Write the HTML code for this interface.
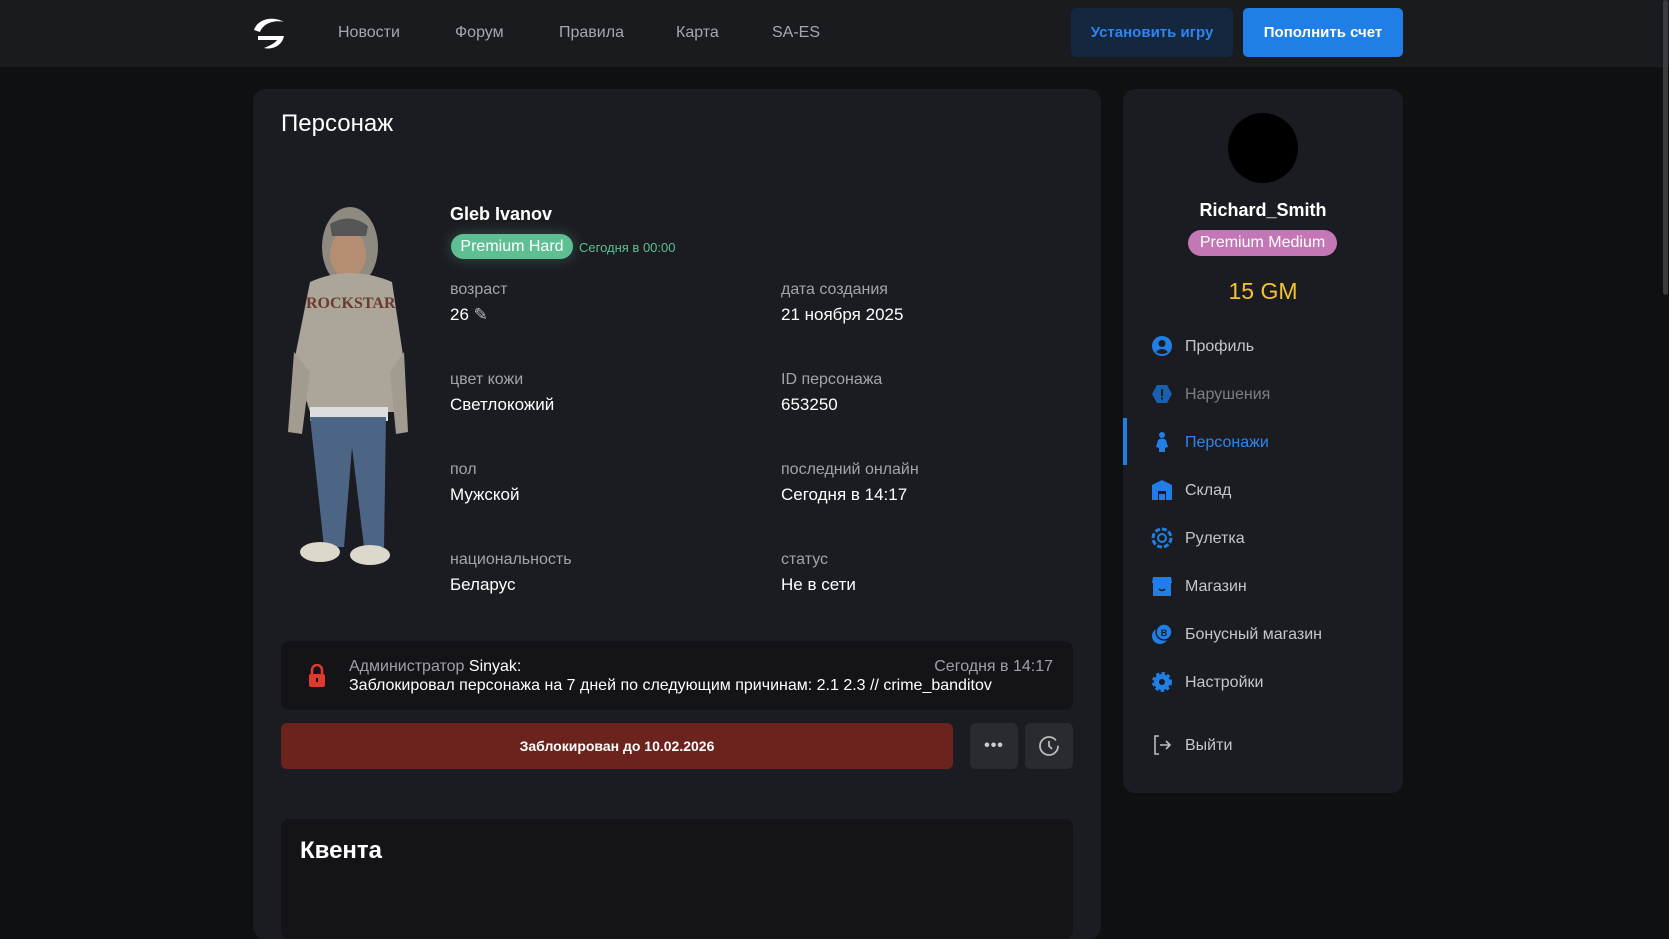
<!DOCTYPE html>
<html><head><meta charset="utf-8"><style>
*{box-sizing:border-box;margin:0;padding:0}
body{width:1669px;height:888px;overflow:hidden;background:#0f1012;font-family:"Liberation Sans","DejaVu Sans",sans-serif;color:#fff;position:relative}
.a{position:absolute}
.nav{left:0;top:0;width:1669px;height:67px;background:#1a1b1f}
.nl{top:24px;font-size:16px;color:#a6a7ad}
.btn{top:8px;height:49px;border-radius:5px;font-size:15px;font-weight:bold;display:flex;align-items:center;justify-content:center}
.card{background:#1b1c21;border-radius:12px}
.lab{font-size:16px;color:#a3a4aa}
.val{font-size:17px;color:#fff}
.mi{left:1185px;font-size:16px;color:#c5c6cb}
.ic{left:1151px;width:22px;height:22px}
</style></head><body>
<div class="a nav"></div>
<svg class="a" style="left:250px;top:12px" width="40" height="40" viewBox="0 0 40 40"><path d="M4 18 C8 6 24 4 34 10 C26 8 14 10 10 20 Z" fill="#fff"/><path d="M8 24 L34 24 C32 34 22 38 14 36 C22 33 26 30 27 28 L8 28 Z" fill="#fff"/></svg>
<div class="a nl" style="left:338px">Новости</div>
<div class="a nl" style="left:455px">Форум</div>
<div class="a nl" style="left:559px">Правила</div>
<div class="a nl" style="left:676px">Карта</div>
<div class="a nl" style="left:772px">SA-ES</div>
<div class="a btn" style="left:1071px;width:162px;background:#15263f;color:#2d86ee">Установить игру</div>
<div class="a btn" style="left:1243px;width:160px;background:#1f7fe6;color:#fff">Пополнить счет</div>
<div class="a" style="left:1663px;top:0;width:5px;height:295px;background:#3a3b40;border-radius:3px"></div>

<div class="a card" style="left:253px;top:89px;width:848px;height:850px"></div>
<div class="a" style="left:281px;top:110px;font-size:24px">Персонаж</div>
<svg class="a" style="left:280px;top:202px" width="152" height="398" viewBox="0 0 152 398">
<ellipse cx="70" cy="45" rx="28" ry="40" fill="#8e8a80"/>
<ellipse cx="68" cy="52" rx="18" ry="24" fill="#b58d72"/>
<path d="M50 22 Q70 10 88 24 L86 34 L52 34Z" fill="#555"/>
<path d="M30 80 Q70 62 112 80 L124 160 L116 210 L30 210 L14 160 Z" fill="#aba59a"/>
<path d="M14 150 L8 230 L22 232 L30 170Z M124 150 L128 230 L116 232 L110 170Z" fill="#a29c90"/>
<text x="26" y="106" font-family="Liberation Serif" font-weight="bold" font-size="16" fill="#6a3b2e">ROCKSTAR</text>
<rect x="30" y="205" width="78" height="14" fill="#ddd"/>
<path d="M30 215 L106 215 L104 345 L84 345 L72 245 L64 345 L44 345 Z" fill="#4d6585"/>
<ellipse cx="40" cy="350" rx="20" ry="10" fill="#ddd8cc"/><ellipse cx="90" cy="353" rx="20" ry="10" fill="#ddd8cc"/>
</svg>
<div class="a" style="left:450px;top:204px;font-size:18px;font-weight:bold">Gleb Ivanov</div>
<div class="a" style="left:451px;top:234px;width:122px;height:25px;border-radius:13px;background:#5dbf92;box-shadow:0 0 14px rgba(93,191,146,.35);font-size:16px;display:flex;align-items:center;justify-content:center">Premium Hard</div>
<div class="a" style="left:579px;top:240px;font-size:13px;color:#5dbf92">Сегодня в 00:00</div>
<div class="a lab" style="left:450px;top:281px">возраст</div>
<div class="a val" style="left:450px;top:305px">26 <span style="color:#bbb">✎</span></div>
<div class="a lab" style="left:781px;top:281px">дата создания</div>
<div class="a val" style="left:781px;top:305px">21 ноября 2025</div>
<div class="a lab" style="left:450px;top:371px">цвет кожи</div>
<div class="a val" style="left:450px;top:395px">Светлокожий</div>
<div class="a lab" style="left:781px;top:371px">ID персонажа</div>
<div class="a val" style="left:781px;top:395px">653250</div>
<div class="a lab" style="left:450px;top:461px">пол</div>
<div class="a val" style="left:450px;top:485px">Мужской</div>
<div class="a lab" style="left:781px;top:461px">последний онлайн</div>
<div class="a val" style="left:781px;top:485px">Сегодня в 14:17</div>
<div class="a lab" style="left:450px;top:551px">национальность</div>
<div class="a val" style="left:450px;top:575px">Беларус</div>
<div class="a lab" style="left:781px;top:551px">статус</div>
<div class="a val" style="left:781px;top:575px">Не в сети</div>

<div class="a" style="left:281px;top:641px;width:792px;height:69px;background:#141418;border-radius:8px"></div>
<svg class="a" style="left:308px;top:664px" width="18" height="24" viewBox="0 0 18 24"><path d="M4 10 V6 a5 5 0 0 1 10 0 V10" stroke="#e0392d" stroke-width="2.5" fill="none"/><rect x="1" y="10" width="16" height="13" rx="2" fill="#e0392d"/><rect x="8" y="14" width="2" height="4" fill="#141418"/></svg>
<div class="a" style="left:349px;top:658px;font-size:16px;color:#9fa0a6">Администратор <span style="color:#fff">Sinyak:</span></div>
<div class="a" style="left:349px;top:677px;font-size:16px">Заблокировал персонажа на 7 дней по следующим причинам: 2.1 2.3 // crime_banditov</div>
<div class="a" style="right:616px;top:658px;font-size:16px;color:#9fa0a6">Сегодня в 14:17</div>
<div class="a" style="left:281px;top:723px;width:672px;height:46px;background:#6c221d;border-radius:6px;display:flex;align-items:center;justify-content:center;font-size:14px;font-weight:bold">Заблокирован до 10.02.2026</div>
<div class="a" style="left:970px;top:723px;width:48px;height:46px;background:#2a2b31;border-radius:6px;display:flex;align-items:center;justify-content:center;font-size:16px;color:#ccc;font-weight:bold;letter-spacing:1px">•••</div>
<div class="a" style="left:1025px;top:723px;width:48px;height:46px;background:#2a2b31;border-radius:6px"></div>
<svg class="a" style="left:1038px;top:735px" width="22" height="22" viewBox="0 0 22 22"><circle cx="11" cy="11" r="9" stroke="#bbb" stroke-width="1.8" fill="none" stroke-dasharray="50 6"/><path d="M11 6 V11 L14 14" stroke="#bbb" stroke-width="1.8" fill="none"/></svg>

<div class="a" style="left:281px;top:819px;width:792px;height:120px;background:#141418;border-radius:8px"></div>
<div class="a" style="left:300px;top:837px;font-size:24px;font-weight:bold">Квента</div>

<div class="a card" style="left:1123px;top:89px;width:280px;height:704px"></div>
<div class="a" style="left:1228px;top:113px;width:70px;height:70px;border-radius:50%;background:#000"></div>
<div class="a" style="left:1123px;top:200px;width:280px;text-align:center;font-size:18px;font-weight:bold">Richard_Smith</div>
<div class="a" style="left:1188px;top:230px;width:149px;height:26px;border-radius:13px;background:#c377b4;font-size:16px;display:flex;align-items:center;justify-content:center">Premium Medium</div>
<div class="a" style="left:1123px;top:278px;width:280px;text-align:center;font-size:23px;color:#f2c230">15 GM</div>
<div class="a" style="left:1123px;top:418px;width:4px;height:47px;background:#1f7fe6"></div>
<svg class="a ic" style="top:335px" viewBox="0 0 22 22"><circle cx="11" cy="11" r="10" fill="#1f7fe6"/><circle cx="11" cy="8.5" r="3.5" fill="#1b1c21"/><path d="M5 17 Q11 11 17 17 Q11 21 5 17Z" fill="#1b1c21"/></svg>
<div class="a mi" style="top:338px">Профиль</div>
<svg class="a ic" style="top:383px" viewBox="0 0 22 22"><path d="M6 2 H16 L21 11 L16 20 H6 L1 11Z" fill="#1a5fb0"/><rect x="10" y="6" width="2" height="7" fill="#1b1c21"/><rect x="10" y="14.5" width="2" height="2" fill="#1b1c21"/></svg>
<div class="a mi" style="top:386px;color:#7d7e84">Нарушения</div>
<svg class="a ic" style="top:431px" viewBox="0 0 22 22"><circle cx="11" cy="4" r="3" fill="#1f7fe6"/><path d="M7 9 Q11 6 15 9 L17 16 L14 17 L14 21 H8 L8 17 L5 16Z" fill="#1f7fe6"/></svg>
<div class="a mi" style="top:434px;color:#2d86ee">Персонажи</div>
<svg class="a ic" style="top:479px" viewBox="0 0 22 22"><path d="M1 6 L11 1 L21 6 V21 H15 V12 H7 V21 H1Z" fill="#1f7fe6"/><rect x="8" y="15" width="6" height="6" fill="#1f7fe6"/></svg>
<div class="a mi" style="top:482px">Склад</div>
<svg class="a ic" style="top:527px" viewBox="0 0 22 22"><circle cx="11" cy="11" r="9" stroke="#1f7fe6" stroke-width="3" fill="none" stroke-dasharray="5 2"/><circle cx="11" cy="11" r="4" stroke="#1f7fe6" stroke-width="2" fill="none"/></svg>
<div class="a mi" style="top:530px">Рулетка</div>
<svg class="a ic" style="top:575px" viewBox="0 0 22 22"><path d="M2 2 H20 L21 8 H1Z" fill="#1f7fe6"/><rect x="2" y="8" width="18" height="13" fill="#1f7fe6"/><path d="M8 14 Q11 17 14 14" stroke="#1b1c21" stroke-width="1.5" fill="none"/></svg>
<div class="a mi" style="top:578px">Магазин</div>
<svg class="a ic" style="top:623px" viewBox="0 0 22 22"><circle cx="9" cy="13" r="8" fill="#1f7fe6"/><circle cx="13" cy="9" r="8" fill="#1f7fe6" stroke="#1b1c21" stroke-width="1.5"/><text x="13" y="13" font-size="9" font-weight="bold" text-anchor="middle" fill="#1b1c21" font-family="Liberation Sans">B</text></svg>
<div class="a mi" style="top:626px">Бонусный магазин</div>
<svg class="a ic" style="top:671px" viewBox="0 0 22 22"><circle cx="11" cy="11" r="8" fill="#1f7fe6" stroke="#1f7fe6" stroke-width="4" stroke-dasharray="3 2.3"/><circle cx="11" cy="11" r="3" fill="#1b1c21"/></svg>
<div class="a mi" style="top:674px">Настройки</div>
<svg class="a ic" style="top:734px" viewBox="0 0 22 22"><path d="M8 2 H4 V20 H8" stroke="#bbb" stroke-width="1.6" fill="none"/><path d="M9 11 H19 M15 7 L19 11 L15 15" stroke="#bbb" stroke-width="1.6" fill="none"/></svg>
<div class="a mi" style="top:737px">Выйти</div>
</body></html>
